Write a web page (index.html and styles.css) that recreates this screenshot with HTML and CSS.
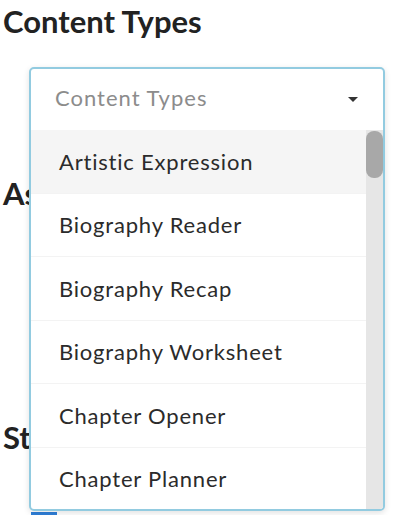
FILE: index.html
```html
<!DOCTYPE html>
<html lang="en">
<head>
    <meta charset="UTF-8">
    <meta name="viewport" content="width=device-width, initial-scale=1.0">
    <title>Content Types</title>
    <link rel="stylesheet" href="styles.css">
</head>
<body>
    <div class="form">
        <div class="field">
            <h2 class="field-label">Content Types</h2>
            <div class="select">
                <!-- open dropdown lies over the fields below -->
                <div class="select-open">
                    <div class="select-control">
                        <span class="placeholder">Content Types</span>
                        <span class="caret"></span>
                    </div>
                    <div class="select-menu">
                        <ul class="options">
                            <li class="option active">Artistic Expression</li>
                            <li class="option">Biography Reader</li>
                            <li class="option">Biography Recap</li>
                            <li class="option">Biography Worksheet</li>
                            <li class="option">Chapter Opener</li>
                            <li class="option">Chapter Planner</li>
                        </ul>
                        <div class="scrollbar">
                            <div class="thumb"></div>
                        </div>
                    </div>
                </div>
            </div>
        </div>

        <div class="field field-assessment">
            <h2 class="field-label">Assessment Type</h2>
            <div class="select select-closed">
                <span class="caret"></span>
            </div>
        </div>

        <div class="field">
            <h2 class="field-label">Standards</h2>
            <div class="tab-line"></div>
        </div>
    </div>
</body>
</html>
```

FILE: styles.css
```css
body {
    margin: 0;
    font-family: Lato, "Liberation Sans", sans-serif;
    color: #222;
    background: #fff;
}

.form {
    padding: 3px 0 0 3px;
}

.field-label {
    margin: 0 0 28px 0;
    font-size: 31px;
    line-height: 36px;
    font-weight: 700;
    color: #222;
}

.select {
    position: relative;
    margin-left: 26px;
    width: 356px;
    height: 63px;
}

.select-closed {
    box-sizing: border-box;
    display: flex;
    align-items: center;
    justify-content: flex-end;
    padding: 0 24px;
    border: 2px solid #ccc;
    border-radius: 5px;
}

.select-open {
    position: absolute;
    top: 0;
    left: 0;
    right: 0;
    z-index: 10;
    box-sizing: border-box;
    border: 2px solid #92cbe0;
    border-radius: 5px;
    background: #fff;
    box-shadow: 0 2px 6px rgba(0, 0, 0, 0.12);
    overflow: hidden;
}

.select-control {
    box-sizing: border-box;
    height: 61px;
    display: flex;
    align-items: center;
    justify-content: space-between;
    padding: 0 25px 4px 24px;
}

.placeholder {
    font-size: 22px;
    letter-spacing: 1px;
    color: #8c8c8c;
}

.caret {
    width: 0;
    height: 0;
    border-left: 5px solid transparent;
    border-right: 5px solid transparent;
    border-top: 5px solid #333;
    margin-top: 3px;
}

.select-menu {
    display: flex;
    height: 379px;
}

.options {
    flex: 1;
    list-style: none;
    margin: 0;
    padding: 0;
    overflow: hidden;
}

.option {
    height: 62.5px;
    display: flex;
    align-items: center;
    padding-left: 28px;
    font-size: 22px;
    letter-spacing: 0.8px;
    color: #2b2b2b;
    border-bottom: 1px solid #f3f3f3;
    white-space: nowrap;
}

.option.active {
    background: #f5f5f5;
}

.scrollbar {
    width: 17px;
    background: #e6e6e6;
}

.thumb {
    height: 47px;
    margin-top: 1px;
    background: #a8a8a8;
    border-radius: 8px;
}

.field-assessment {
    margin-top: 45px;
    margin-bottom: 118px;
}

.field-assessment .field-label {
    margin-bottom: 27px;
}

.tab-line {
    margin: 57px 0 0 28px;
    width: 26px;
    height: 3px;
    background: #2f7fd8;
}
```
